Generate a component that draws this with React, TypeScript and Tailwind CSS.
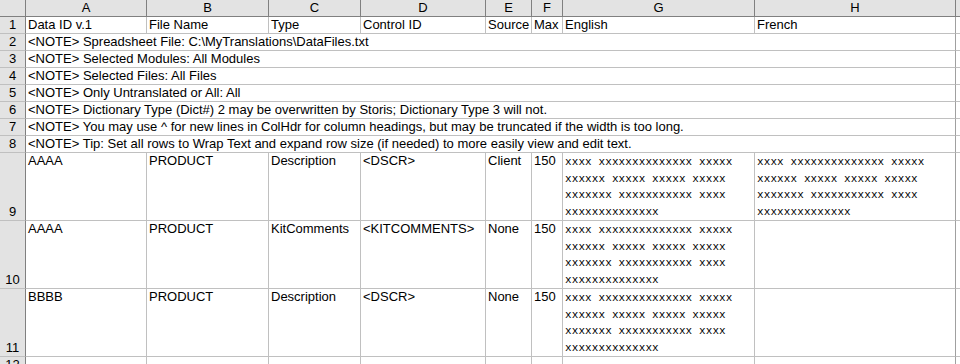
import React from 'react';

// Column widths include the 1px right grid line of each cell.
const GRID =
  'grid grid-cols-[26px_121px_122px_92px_125px_46px_31px_192px_201px_1fr]';

const letters = ['A', 'B', 'C', 'D', 'E', 'F', 'G', 'H'];

const titles = [
  'Data ID v.1',
  'File Name',
  'Type',
  'Control ID',
  'Source',
  'Max',
  'English',
  'French',
];

const notes = [
  '<NOTE> Spreadsheet File: C:\\MyTranslations\\DataFiles.txt',
  '<NOTE> Selected Modules: All Modules',
  '<NOTE> Selected Files: All Files',
  '<NOTE> Only Untranslated or All: All',
  '<NOTE> Dictionary Type (Dict#) 2 may be overwritten by Storis; Dictionary Type 3 will not.',
  '<NOTE> You may use ^ for new lines in ColHdr for column headings, but may be truncated if the width is too long.',
  '<NOTE> Tip: Set all rows to Wrap Text and expand row size (if needed) to more easily view and edit text.',
];

const xText = [
  'xxxx xxxxxxxxxxxxxx xxxxx',
  'xxxxxx xxxxx xxxxx xxxxx',
  'xxxxxxx xxxxxxxxxxx xxxx',
  'xxxxxxxxxxxxxx',
];

type DataRow = {
  num: number;
  id: string;
  file: string;
  type: string;
  control: string;
  source: string;
  max: string;
  french: boolean;
};

const dataRows: DataRow[] = [
  { num: 9, id: 'AAAA', file: 'PRODUCT', type: 'Description', control: '<DSCR>', source: 'Client', max: '150', french: true },
  { num: 10, id: 'AAAA', file: 'PRODUCT', type: 'KitComments', control: '<KITCOMMENTS>', source: 'None', max: '150', french: false },
  { num: 11, id: 'BBBB', file: 'PRODUCT', type: 'Description', control: '<DSCR>', source: 'None', max: '150', french: false },
];

const XBlock = () => (
  <div className="pt-[1px] font-[family-name:'Liberation_Mono',monospace] text-[11px] leading-[16.67px] tracking-[0.1px] whitespace-nowrap">
    {xText.map((line) => (
      <div key={line}>{line}</div>
    ))}
  </div>
);

const Cell = ({ children }: { children?: React.ReactNode }) => (
  <div className="border-r border-b border-[#c0c0c0] pl-[2px] whitespace-nowrap overflow-hidden">
    {children}
  </div>
);

export default function App() {
  return (
    <div className="w-[960px] h-[364px] overflow-hidden bg-white text-black text-[13px] leading-[16px] font-[family-name:'Liberation_Sans',Arial,sans-serif]">
      {/* column headers */}
      <div className={`${GRID} h-[17px]`}>
        <div className="bg-[#e3e3e3] border-r border-b border-[#808080]" />
        {letters.map((l) => (
          <div
            key={l}
            className="bg-[#e3e3e3] border-r border-b border-[#808080] text-center"
          >
            {l}
          </div>
        ))}
        <div className="bg-[#e3e3e3] border-b border-[#808080]" />
      </div>

      {/* row 1 */}
      <div className={`${GRID} h-[17px]`}>
        <div className="bg-[#e3e3e3] border-r border-[#808080] border-b-[#c0c0c0] border-b text-center">
          1
        </div>
        {titles.map((t, i) => (
          <div
            key={t}
            className={
              i === 7
                ? 'border-r border-b border-[#c0c0c0] border-r-[#a0a0a0] pl-[2px] whitespace-nowrap overflow-hidden'
                : 'border-r border-b border-[#c0c0c0] pl-[2px] whitespace-nowrap overflow-hidden'
            }
          >
            {t}
          </div>
        ))}
        <div className="border-b border-[#c0c0c0]" />
      </div>

      {/* note rows 2-8, text spills across the columns */}
      {notes.map((n, i) => (
        <div key={n} className={`${GRID} h-[17px]`}>
          <div className="bg-[#e3e3e3] border-r border-[#808080] border-b border-b-[#c0c0c0] text-center">
            {i + 2}
          </div>
          <div className="col-span-8 border-r border-b border-[#c0c0c0] border-r-[#a0a0a0] pl-[2px] whitespace-nowrap">
            {n}
          </div>
          <div className="border-b border-[#c0c0c0]" />
        </div>
      ))}

      {/* data rows */}
      {dataRows.map((r) => (
        <div key={r.num} className={`${GRID} h-[68px]`}>
          <div className="bg-[#e3e3e3] border-r border-[#808080] border-b border-b-[#c0c0c0] flex items-end justify-center">
            {r.num}
          </div>
          <Cell>{r.id}</Cell>
          <Cell>{r.file}</Cell>
          <Cell>{r.type}</Cell>
          <Cell>{r.control}</Cell>
          <Cell>{r.source}</Cell>
          <Cell>{r.max}</Cell>
          <Cell>
            <XBlock />
          </Cell>
          <div className="border-r border-b border-[#c0c0c0] border-r-[#a0a0a0] pl-[2px] overflow-hidden">
            {r.french && <XBlock />}
          </div>
          <div className="border-b border-[#c0c0c0]" />
        </div>
      ))}

      {/* row 12, cut off by the window */}
      <div className={`${GRID} h-[17px]`}>
        <div className="bg-[#e3e3e3] border-r border-[#808080] border-b border-b-[#c0c0c0] text-center">
          12
        </div>
        <Cell />
        <Cell />
        <Cell />
        <Cell />
        <Cell />
        <Cell />
        <Cell />
        <div className="border-r border-b border-[#c0c0c0] border-r-[#a0a0a0]" />
        <div className="border-b border-[#c0c0c0]" />
      </div>
    </div>
  );
}
